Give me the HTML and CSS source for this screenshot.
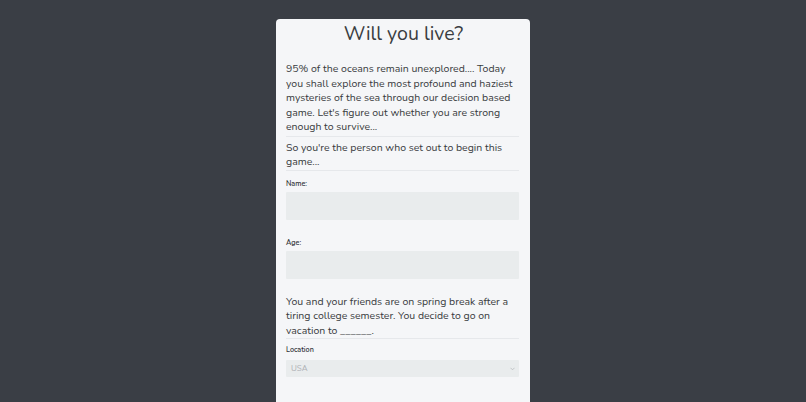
FILE: index.html
```html
<!DOCTYPE html>
<html lang="en">
<head>
<meta charset="utf-8">
<title>Will you live?</title>
<link rel="stylesheet" href="styles.css">
</head>
<body>
<main class="card">
  <h1 class="title">Will you live?</h1>
  <p class="story">95% of the oceans remain unexplored.... Today you shall explore the most profound and haziest mysteries of the sea through our decision based game. Let's figure out whether you are strong enough to survive...</p>
  <p class="story story-next">So you're the person who set out to begin this game...</p>
  <form class="form">
    <div class="field field-first">
      <label class="label" for="name">Name:</label>
      <input class="input" id="name" type="text">
    </div>
    <div class="field field-age">
      <label class="label" for="age">Age:</label>
      <input class="input" id="age" type="text">
    </div>
    <p class="story story-trip">You and your friends are on spring break after a tiring college semester. You decide to go on vacation to ______.</p>
    <div class="field field-loc">
      <label class="label" for="loc">Location</label>
      <div class="select-wrap">
        <select class="select" id="loc">
          <option>USA</option>
        </select>
        <svg class="chev" width="5" height="4" viewBox="0 0 5 4"><path d="M0.5 0.8 L2.5 2.8 L4.5 0.8" fill="none" stroke="#b8bbbe" stroke-width="0.8"/></svg>
      </div>
    </div>
  </form>
</main>
</body>
</html>
```
FILE: styles.css
```css
html, body {
  margin: 0;
  padding: 0;
}
body {
  background: #3a3e45;
  font-family: "Nunito", "Lato", "Open Sans", sans-serif;
  height: 402px;
  overflow: hidden;
}
.card {
  box-sizing: border-box;
  width: 254px;
  margin: 19px auto 0;
  background: #f5f6f8;
  border-radius: 4px;
  padding: 0 11px 40px 10px;
  min-height: 420px;
}
.title {
  margin: 0;
  padding-left: 2px;
  font-size: 19.6px;
  line-height: 30px;
  font-weight: 400;
  color: #3a3d41;
  text-align: center;
}
.story {
  margin: 13px 0 0;
  font-size: 10.5px;
  line-height: 14.5px;
  color: #393c40;
  padding-bottom: 1px;
  border-bottom: 1px solid #e6e8eb;
}
.story-next {
  margin-top: 4px;
  padding-bottom: 0;
}
.story-trip {
  margin-top: 16px;
  padding-bottom: 0;
}
.form {
  display: flex;
  flex-direction: column;
}
.field {
  display: flex;
  flex-direction: column;
  gap: 3px;
}
.field-first {
  margin-top: 8px;
}
.field-age {
  margin-top: 18px;
}
.field-loc {
  margin-top: 6px;
  gap: 5px;
}
.label {
  font-size: 7.2px;
  line-height: 10px;
  font-weight: 600;
  color: #313438;
}
.input {
  box-sizing: border-box;
  width: 100%;
  height: 28px;
  border: 0;
  border-radius: 1px;
  background: #e9eced;
  margin: 0;
  padding: 0 5px;
}
.select-wrap {
  position: relative;
}
.select {
  display: block;
  box-sizing: border-box;
  width: 100%;
  height: 17px;
  border: 0;
  border-radius: 1px;
  background: #e9eced;
  color: #aeb1b5;
  font-family: inherit;
  font-size: 8px;
  padding: 0 5px;
  margin: 0;
  -webkit-appearance: none;
  appearance: none;
}
.chev {
  position: absolute;
  right: 4px;
  top: 7px;
}
```
